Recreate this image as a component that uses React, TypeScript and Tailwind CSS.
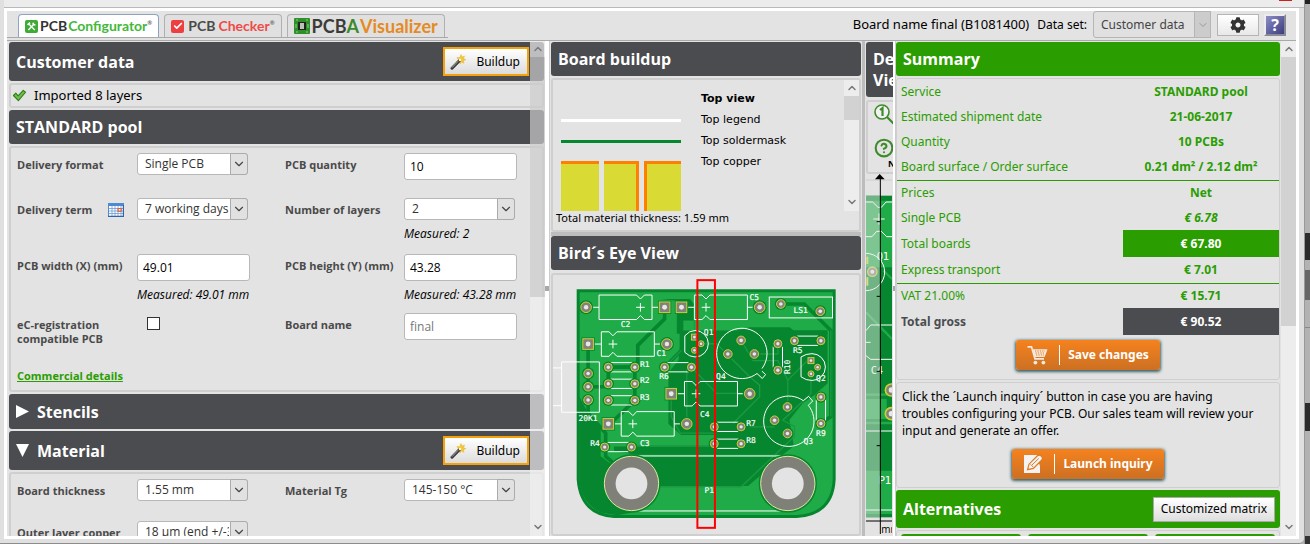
import React from "react";
import { ChevronDown, ChevronUp, Check, HelpCircle } from "lucide-react";
import { FaCog } from "react-icons/fa";
import clsx from "clsx";

/* ---------- small parts ---------- */

function Tab({ active, children }: { active?: boolean; children: React.ReactNode }) {
  return (
    <button
      className={clsx(
        "flex h-[23px] items-center rounded-t-[4px] border border-b-0 px-[6px] font-['Lato',sans-serif] font-bold leading-none",
        active ? "border-[#8fa3c4] bg-white" : "border-[#b0b0b0] bg-[#e0e0e0]",
      )}
    >
      {children}
    </button>
  );
}

function Bar({ children, className, tone = "dark" }: { children: React.ReactNode; className?: string; tone?: "dark" | "green" }) {
  return (
    <div
      className={clsx(
        "flex shrink-0 items-center rounded-[3px] pl-[7px] font-['Open_Sans',sans-serif] text-base font-bold text-white",
        tone === "green" ? "bg-[#2a9d00]" : "bg-[#4b4c50]",
        className,
      )}
    >
      {children}
    </div>
  );
}

function Wand() {
  return (
    <svg viewBox="0 0 16 16" className="size-4" aria-hidden="true">
      <path d="M11 0.5l1 2.5 2.5-1-1 2.5 2.3 1.2-2.5 1 .7 2.6-2.6-1.2-1.4 2-.8-2.6-2.7.2 1.8-2-1.4-2.2 2.7.3z" fill="#f3c838" stroke="#e0a820" strokeWidth=".4" />
      <path d="M2 14.2L9.6 6.5" stroke="#3a3a3a" strokeWidth="3" strokeLinecap="round" />
      <path d="M2.2 13.4L8 7.4" stroke="#b9b9b9" strokeWidth=".9" strokeLinecap="round" />
      <circle cx="10" cy="6" r="1.3" fill="#fff8d0" />
    </svg>
  );
}

function BuildupButton() {
  return (
    <button className="ml-auto mr-[15px] flex h-[29px] w-[86px] items-center justify-between border-2 border-[#f5a20a] bg-linear-to-b from-white to-[#dcdcdc] pl-[5px] pr-[7px] font-['Noto_Sans',sans-serif] text-xs font-normal text-black">
      <Wand />
      Buildup
    </button>
  );
}

function Select({ id, value }: { id: string; value: string }) {
  return (
    <div className="relative h-[22px] w-[111px]">
      <select
        id={id}
        className="block h-full w-full appearance-none overflow-hidden rounded-[3px] border border-[#b8b8b8] bg-white pl-[7px] pr-[18px] font-['Open_Sans',sans-serif] text-xs text-[#333]"
      >
        <option>{value}</option>
      </select>
      <span className="pointer-events-none absolute inset-y-0 right-0 flex w-[18px] items-center justify-center rounded-r-[3px] border border-[#ababab] bg-[#e1e1e1]">
        <ChevronDown className="size-[14px] text-[#444]" strokeWidth={2} />
      </span>
    </div>
  );
}

function Text({ id, value, muted }: { id: string; value: string; muted?: boolean }) {
  return (
    <input
      id={id}
      defaultValue={value}
      className={clsx(
        "block h-[27px] w-[113px] rounded-[3px] border border-[#b8b8b8] bg-white px-[5px] font-['Open_Sans',sans-serif] text-xs",
        muted ? "text-[#777]" : "text-black",
      )}
    />
  );
}

function Label({ htmlFor, children }: { htmlFor: string; children: React.ReactNode }) {
  return (
    <label htmlFor={htmlFor} className="pt-[5px] font-['Open_Sans',sans-serif] text-[11px] font-bold leading-[14px] text-[#4a4a4a]">
      {children}
    </label>
  );
}

function Measured({ children }: { children: React.ReactNode }) {
  return (
    <p className="mt-[5px] whitespace-nowrap font-['Open_Sans',sans-serif] text-xs italic leading-[17px] text-black">{children}</p>
  );
}

function CalendarIcon() {
  return (
    <svg viewBox="0 0 16 14" className="h-[14px] w-4" aria-hidden="true">
      <rect width="16" height="14" fill="#4f8ad0" />
      <rect x="1" y="3" width="14" height="10" fill="#fff" />
      <path d="M1 5.5h14M1 8h14M1 10.5h14M4 3v10M7 3v10M10 3v10M13 3v10" stroke="#6f9cd3" strokeWidth=".8" />
      <path d="M0 13.3h16M15.4 2v12" stroke="#2c64ad" strokeWidth="1.2" />
      <rect x="10" y="5.5" width="3.2" height="2.8" fill="none" stroke="#e8572a" />
    </svg>
  );
}

function OrangeButton({ icon, children }: { icon: React.ReactNode; children: React.ReactNode }) {
  return (
    <button className="mx-auto flex h-[30px] items-center rounded-[3px] bg-linear-to-b from-[#f5821e] to-[#cc7022] px-[11px] text-xs font-bold text-white shadow-[0_1px_3px_1px_#3f6468]">
      {icon}
      <span className="ml-[11px] mr-[8px] h-[20px] w-px bg-white" />
      {children}
    </button>
  );
}

function CartIcon() {
  return (
    <svg viewBox="0 0 21 20" className="h-[20px] w-[21px]" aria-hidden="true">
      <path d="M0.5 1.8H4.5L8 13.8H17" fill="none" stroke="#f3e9df" strokeWidth="1.7" />
      <path d="M5.4 4.2H20.5L17.6 12H7.7Z" fill="#f3e9df" />
      <path d="M8 6h10M8.5 8h9M9 10h8" stroke="#ea7c20" strokeWidth="1" strokeDasharray="1.3 1.1" />
      <circle cx="8.4" cy="17.6" r="1.9" fill="#f3e9df" />
      <circle cx="16.4" cy="17.6" r="1.9" fill="#f3e9df" />
    </svg>
  );
}

function EditIcon() {
  return (
    <svg viewBox="0 0 20 20" className="size-[20px]" aria-hidden="true">
      <path d="M1 1H14V4L17 12V19H1Z" fill="#f3f3f3" />
      <path d="M4.6 15.6L6 10.2L14.4 1.8Q16.4 0.4 18.4 2.2Q20.2 4.2 18.8 6L10.4 14.4Z" fill="#f3f3f3" stroke="#e07a20" strokeWidth="1.2" />
      <path d="M7.6 10.4L10.4 13.2M9 11L15.6 4.6" stroke="#e07a20" strokeWidth="1" />
    </svg>
  );
}

/* ---------- board drawings ---------- */

function RoundPad({ x, y, r = 12 }: { x: number; y: number; r?: number }) {
  return (
    <g>
      <circle cx={x} cy={y} r={r + 5} fill="#05842f" />
      <circle cx={x} cy={y} r={r} fill="#82827a" stroke="#cfcf35" strokeWidth="3" />
      <circle cx={x} cy={y} r={r * 0.42} fill="#e8e8e8" />
    </g>
  );
}

function SquarePad({ x, y, r = 16 }: { x: number; y: number; r?: number }) {
  return (
    <g>
      <rect x={x - r - 4} y={y - r - 4} width={r * 2 + 8} height={r * 2 + 8} fill="#05842f" />
      <rect x={x - r} y={y - r} width={r * 2} height={r * 2} fill="#82827a" stroke="#cfcf35" strokeWidth="3" />
      <circle cx={x} cy={y} r={r * 0.46} fill="#e8e8e8" />
    </g>
  );
}

const CAPS = [
  { x: 145, y: 73, plus: 270, sq: 343, round: 106 },
  { x: 433, y: 73, plus: 468, sq: 394, round: 630 },
  { x: 152, y: 184, plus: 187, sq: 112, round: 350 },
  { x: 403, y: 334, plus: 438, sq: 363, round: 600 },
  { x: 212, y: 425, plus: 247, sq: 173, round: 410 },
];
const H_RES = [
  [173, 253, 291],
  [173, 253, 341],
  [173, 253, 391],
  [343, 424, 291],
  [162, 243, 532],
  [493, 574, 471],
  [493, 574, 522],
  [735, 815, 211],
];
const V_RES = [
  [685, 220, 300],
  [815, 381, 461],
];
const SMALL_PADS = [
  [453, 220],
  [433, 240],
  [805, 291],
  [785, 311],
];
const MID_PADS = [
  [574, 210],
  [534, 251],
  [614, 251],
  [714, 411],
  [675, 451],
  [714, 491],
  [694, 100],
  [813, 122],
  [112, 310],
  [112, 350],
  [112, 390],
];
const NAMES: [string, number, number][] = [
  ["C2", 225, 162],
  ["C5", 614, 80],
  ["C1", 333, 250],
  ["C4", 464, 432],
  ["R1", 283, 281],
  ["R2", 283, 331],
  ["R3", 283, 381],
  ["R4", 133, 521],
  ["C3", 283, 521],
  ["R6", 341, 320],
  ["Q1", 476, 187],
  ["Q4", 513, 318],
  ["20K1", 112, 445],
  ["LS1", 754, 120],
  ["R5", 745, 240],
  ["Q2", 815, 324],
  ["R9", 815, 491],
  ["Q3", 777, 514],
  ["R7", 604, 461],
  ["R8", 604, 511],
  ["P1", 478, 662],
];

function BoardView() {
  return (
    <svg viewBox="6 15 924 768" className="h-[256px] w-full" role="img" aria-label="Board top view">
      <path d="M82 60H855V630Q850 735 742 742H190Q90 735 82 630Z" fill="#1fab48" />
      <path d="M82 60H855V630Q850 735 742 742H190Q90 735 82 630Z" fill="none" stroke="#06852f" strokeWidth="9" />
      <g fill="#06862f">
        <path d="M86 380L112 430L150 480V560L190 590V640H330V655L270 725L200 738L150 730Q90 700 86 630Z" />
        <path d="M360 300L385 270L395 180H560L600 170H720L740 185H835V340L800 370V440L770 500L700 555H260L190 545V530H495V490L390 485L360 450Z" />
        <path d="M243 560H700L595 650H243Z" />
        <path d="M330 85H420L435 105V150H395V190H380V90Z" />
      </g>
      <g fill="#1fab48">
        <path d="M395 490H490V520H395Z" />
        <path d="M760 400L800 372V440L775 500L735 540L720 450Z" />
      </g>
      <g fill="none" stroke="#06862f" strokeWidth="11">
        <path d="M343 110V145L262 225V290L173 291" />
        <path d="M394 110V240L343 291L360 310V460L395 490H493" />
        <path d="M112 220V350H160L173 340V291H253V391L180 461" />
        <path d="M112 390V430L165 490V560L200 590" />
        <path d="M694 100H765L845 180V440L815 461" />
        <path d="M735 205V185H835" />
      </g>
      <g fill="none" stroke="#1c9a44" strokeWidth="4">
        <path d="M433 200V110M343 291L394 240M424 291L500 370H600M453 220H500L600 320L630 345V380L550 460" />
        <path d="M574 210L610 271H685L715 330V411M785 311V370L700 451L735 470V500L574 652H250" />
        <path d="M243 528H493M410 461V291M363 371V440L390 490H493M614 251H685V220M715 330L785 260" />
        <path d="M600 471H675M845 180V440" />
      </g>
      <g fill="none" stroke="#fff" strokeWidth="3">
        {CAPS.map(({ x, y, plus, sq, round }) => (
          <g key={`${x}-${y}`}>
            <path
              d={`M${x} ${y}H${plus - 12}L${plus} ${y + 12}L${plus + 12} ${y}H${x + 160}V${y + 74}H${plus + 12}L${plus} ${y + 62}L${plus - 12} ${y + 74}H${x}Z`}
            />
            <path d={`M${plus - 13} ${y + 37}h26M${plus} ${y + 24}v26`} />
            <path d={sq < x ? `M${sq} ${y + 37}H${x}M${x + 160} ${y + 37}H${round}` : `M${round} ${y + 37}H${x}M${x + 160} ${y + 37}H${sq}`} />
          </g>
        ))}
        {H_RES.map(([a, b, y]) => (
          <path key={`${a}-${y}`} d={`M${a + 8} ${y - 14}H${b - 8}M${a + 8} ${y + 14}H${b - 8}`} />
        ))}
        {V_RES.map(([x, a, b]) => (
          <path key={x} d={`M${x - 14} ${a + 8}V${b - 8}M${x + 14} ${a + 8}V${b - 8}`} />
        ))}
        <path d="M404 196Q418 180 435 180A40 40 0 0 1 435 260Q418 260 404 246Z" />
        <path d="M755 260Q770 250 788 250A40 40 0 0 1 788 331Q770 331 755 320Z" />
        <path d="M637 295A76 76 0 1 0 622 310L638 325L648 313L637 303" />
        <path d="M762 392A76 76 0 1 0 777 406L790 393L778 379L762 392" />
        <rect x="659" y="79" width="191" height="63" />
        <path d="M32 275H146V427H32ZM6 293H32M6 407H32" />
        <path d="M243 559H715M243 725H715" />
      </g>
      {CAPS.map(({ y, sq, round }) => (
        <g key={`${sq}-${y}`}>
          <SquarePad x={sq} y={y + 37} />
          <RoundPad x={round} y={y + 37} r={16} />
        </g>
      ))}
      {H_RES.map(([a, b, y]) => (
        <g key={`${b}-${y}`}>
          <RoundPad x={a} y={y} />
          <RoundPad x={b} y={y} />
        </g>
      ))}
      {V_RES.map(([x, a, b]) => (
        <g key={x}>
          <RoundPad x={x} y={a} />
          <RoundPad x={x} y={b} />
        </g>
      ))}
      {SMALL_PADS.map(([x, y]) => (
        <RoundPad key={`${x}-${y}`} x={x} y={y} r={9} />
      ))}
      {MID_PADS.map(([x, y]) => (
        <RoundPad key={`${x}-${y}`} x={x} y={y} r={13} />
      ))}
      <SquarePad x={433} y={200} r={9} />
      <SquarePad x={785} y={271} r={9} />
      {[243, 715].map((x) => (
        <g key={x}>
          <circle cx={x} cy="642" r="88" fill="#06862f" />
          <circle cx={x} cy="642" r="82" fill="#7f8077" stroke="#e6e9a0" strokeWidth="3" />
          <circle cx={x} cy="642" r="48" fill="#e3e3e3" />
        </g>
      ))}
      <g fill="#fff" stroke="#fff" strokeWidth=".5" fontFamily="DejaVu Sans Mono" fontSize="24" textAnchor="middle">
        {NAMES.map(([t, x, y]) => (
          <text key={t} x={x} y={y + 8}>
            {t}
          </text>
        ))}
        <text transform="translate(723 290) rotate(-90)">R10</text>
      </g>
      <rect x="442" y="28" width="53" height="748" fill="none" stroke="#f00" strokeWidth="6" />
    </svg>
  );
}

function DetailView() {
  return (
    <svg viewBox="48 250 78 1083" className="h-[361px] w-[26px] shrink-0" role="img" aria-label="Zoomed board">
      <path d="M48 268H126" stroke="#ccc" strokeWidth="3" />
      <rect x="48" y="315" width="78" height="965" fill="#06862f" />
      <path d="M48 330H126V530H48ZM48 925H110V985H48ZM48 1140H126V1270H48Z" fill="#1fab48" />
      <path d="M48 665L126 745M48 912H126M48 997H126M100 540L126 565" stroke="#1fab48" strokeWidth="7" fill="none" />
      <g fill="none" stroke="#fff" strokeWidth="3">
        <path d="M48 334H68L84 350H94L108 334H126M48 438H66L80 422H94L110 438H126M70 385H104M87 368V402" />
        <path d="M48 488A56 56 0 0 1 48 600M126 703H62L48 720M48 795L62 806H126M48 755H62M48 1021H126M48 1258H126" />
      </g>
      <path d="M52 498V520M52 560V585" stroke="#cfcf35" strokeWidth="6" />
      <circle cx="67" cy="543" r="14" fill="#82827a" stroke="#cfcf35" strokeWidth="4" />
      <circle cx="67" cy="543" r="6" fill="#e8e8e8" />
      {[898, 969].map((y) => (
        <g key={y}>
          <circle cx="124" cy={y} r="18" fill="#82827a" stroke="#cfcf35" strokeWidth="5" />
          <circle cx="124" cy={y} r="8" fill="#e8e8e8" />
        </g>
      ))}
      <g fill="#fff" fontFamily="DejaVu Sans Mono" fontSize="31">
        <text x="80" y="507">Q1</text>
        <text x="62" y="851">C4</text>
        <text x="86" y="1180">P1</text>
      </g>
      <rect x="48" y="315" width="42" height="965" fill="#e3e3e3" opacity=".48" />
      <path d="M75 266H104L89 250Z" />
      <path d="M91 262V1330M80 393H91M80 617H91M80 842H91M80 1065H91M48 1291H126" stroke="#000" strokeWidth="3" />
      <text x="94" y="1326" fontFamily="Open Sans" fontSize="30">mm</text>
    </svg>
  );
}

function Scroll({ thumb, overlay }: { thumb: string; overlay?: boolean }) {
  const track = overlay ? "bg-[#f0f0f0]/70" : "bg-[#ededed]";
  return (
    <div className="flex h-full w-[15px] shrink-0 flex-col text-[#7a7a7a]">
      <div className={clsx("flex h-[16px] shrink-0 items-center justify-center", track)}>
        <ChevronUp className="size-3" strokeWidth={3} />
      </div>
      <div className={clsx("shrink-0", thumb, overlay ? "bg-[#ccc]/70" : "bg-[#d2d2d2]")} />
      <div className={clsx("flex flex-1 items-end justify-center pb-[3px]", track)}>
        <ChevronDown className="size-3" strokeWidth={3} />
      </div>
    </div>
  );
}

function Divider({ className }: { className: string }) {
  return (
    <div className={clsx("flex shrink-0 items-center bg-white", className)}>
      <span className="h-[5px] w-full bg-[#a8a8a8]" />
    </div>
  );
}

const panel = "rounded-[3px] border-2 border-[#cfcfcf] bg-[#e3e3e3]";

/* ---------- columns ---------- */

function LeftColumn() {
  return (
    <section className="relative h-full w-[538px] shrink-0 overflow-hidden pt-px">
      <div className="flex flex-col gap-[2px] pl-[2px] pr-px">
        <Bar className="h-[39px]">
          <h2>Customer data</h2>
          <BuildupButton />
        </Bar>
        <div className={clsx(panel, "flex h-[25px] items-center gap-[7px] pl-px text-[13px] text-black")}>
          <svg viewBox="0 0 16 14" className="h-[13px] w-[15px]" aria-hidden="true">
            <path d="M1.5 7L4 4.5L6.5 7.5L12 1.5L14.5 3.5L6.8 12.5Z" fill="#6cc04a" stroke="#2f7d1b" strokeWidth="1.2" strokeLinejoin="round" />
          </svg>
          Imported 8 layers
        </div>
        <Bar className="h-[34px]">
          <h2>STANDARD pool</h2>
        </Bar>
        <div className={clsx(panel, "h-[246px] pl-[6px] pt-[5px]")}>
          <div className="grid grid-cols-[120px_148px_119px_113px] grid-rows-[45px_56px_59px_53px]">
            <Label htmlFor="format">Delivery format</Label>
            <Select id="format" value="Single PCB" />
            <Label htmlFor="qty">PCB quantity</Label>
            <Text id="qty" value="10" />

            <div className="flex items-start justify-between pr-[13px]">
              <Label htmlFor="term">Delivery term</Label>
              <span className="pt-[5px]">
                <CalendarIcon />
              </span>
            </div>
            <Select id="term" value="7 working days" />
            <Label htmlFor="layers">Number of layers</Label>
            <div>
              <Select id="layers" value="2" />
              <Measured>Measured: 2</Measured>
            </div>

            <Label htmlFor="w">PCB width (X) (mm)</Label>
            <div>
              <Text id="w" value="49.01" />
              <Measured>Measured: 49.01 mm</Measured>
            </div>
            <Label htmlFor="h">PCB height (Y) (mm)</Label>
            <div>
              <Text id="h" value="43.28" />
              <Measured>Measured: 43.28 mm</Measured>
            </div>

            <Label htmlFor="ec">
              eC-registration
              <br />
              compatible PCB
            </Label>
            <div className="pl-[10px] pt-[4px]">
              <input id="ec" type="checkbox" className="block size-[13px] appearance-none border border-[#333] bg-white" />
            </div>
            <Label htmlFor="bname">Board name</Label>
            <Text id="bname" value="final" muted />
          </div>
          <a href="#commercial" className="block w-fit font-['Open_Sans',sans-serif] text-[11px] font-bold leading-[20px] text-[#2a9d00] underline">
            Commercial details
          </a>
        </div>
        <Bar className="h-[35px] gap-[8px]">
          <svg viewBox="0 0 12 12" className="size-[13px]" aria-hidden="true">
            <path d="M0 0L12 6L0 12Z" fill="#fff" />
          </svg>
          <h2>Stencils</h2>
        </Bar>
        <Bar className="h-[39px] gap-[8px]">
          <svg viewBox="0 0 12 12" className="size-[13px]" aria-hidden="true">
            <path d="M0 0H12L6 12Z" fill="#fff" />
          </svg>
          <h2>Material</h2>
          <BuildupButton />
        </Bar>
        <div className={clsx(panel, "h-[246px] pl-[6px] pt-[5px]")}>
          <div className="grid grid-cols-[120px_148px_119px_113px] grid-rows-[42px_45px]">
            <Label htmlFor="thick">Board thickness</Label>
            <Select id="thick" value="1.55 mm" />
            <Label htmlFor="tg">Material Tg</Label>
            <Select id="tg" value="145-150 °C" />
            <Label htmlFor="outer">Outer layer copper</Label>
            <Select id="outer" value="18 µm (end +/-35 µm)" />
          </div>
        </div>
      </div>
      <div className="absolute inset-y-0 right-0">
        <Scroll overlay thumb="h-[240px]" />
      </div>
    </section>
  );
}

const BUILDUP = ["Top legend", "Top soldermask", "Top copper"];

function MiddleColumn() {
  return (
    <section className="flex h-full min-w-0 flex-1 flex-col border-l border-[#ccc] pl-px pr-px pt-px">
      <Bar className="h-[34px]">
        <h2>Board buildup</h2>
      </Bar>
      <div className={clsx(panel, "mt-[2px] h-[154px] shrink-0")}>
        <div className="flex h-[131px]">
          <svg viewBox="0 0 140 131" className="h-[131px] w-[140px]" aria-hidden="true">
            <rect x="8" y="39" width="120" height="3" fill="#fff" />
            <rect x="8" y="60" width="120" height="3" fill="#06862f" />
            <rect x="8" y="81" width="120" height="51" fill="#ff8000" />
            <path d="M8 84h38v48H8zM51 84h32v48H51zM94 84h34v48H94z" fill="#d9da33" />
            <path d="M46 81h5v51h-5zM86 81h5v51h-5z" fill="#e3e3e3" />
          </svg>
          <ul className="flex-1 pl-[8px] pt-[8px] font-['DejaVu_Sans'] text-[11px] leading-[21px] text-black">
            <li className="font-bold">Top view</li>
            {BUILDUP.map((t) => (
              <li key={t}>{t}</li>
            ))}
          </ul>
          <Scroll thumb="h-[24px]" />
        </div>
        <p className="pl-[3px] text-[11px] leading-[14px] text-black">Total material thickness: 1.59 mm</p>
      </div>
      <div className="h-[4px] shrink-0 bg-[#bdbdbd]" />
      <Bar className="h-[34px]">
        <h2>Bird´s Eye View</h2>
      </Bar>
      <div className={clsx(panel, "mt-[3px] min-h-0 flex-1 overflow-hidden")}>
        <BoardView />
      </div>
    </section>
  );
}

function DetailColumn() {
  return (
    <section className="flex h-full w-[31px] shrink-0 flex-col overflow-hidden border-l-[3px] border-[#bdbdbd] pl-px pt-px">
      <div className="h-[55px] w-[100px] shrink-0 rounded-[3px] bg-[#4b4c50] pl-[7px] pt-[7px] font-['Open_Sans',sans-serif] text-base font-bold leading-[21px] text-white">
        <h2>
          Detailed
          <br />
          View
        </h2>
      </div>
      <div className={clsx(panel, "mt-[3px] h-[74px] w-[100px] shrink-0 pl-[6px] pt-[2px]")}>
        <svg viewBox="0 0 22 22" className="size-[22px]" aria-hidden="true">
          <circle cx="8" cy="8" r="7" fill="#f2f2f2" stroke="#3f8a2c" strokeWidth="1.6" />
          <path d="M6 6L8.5 4V12M13 13L20 20" stroke="#3f8a2c" strokeWidth="2.2" fill="none" />
        </svg>
        <HelpCircle className="mt-[12px] size-[20px] text-[#3f8a2c]" strokeWidth={2.5} />
        <p className="pl-[14px] text-[9px] font-bold leading-[12px] text-black">No</p>
      </div>
      <DetailView />
    </section>
  );
}

type Row = { name: string; value: string; mode?: "line" | "green" | "dark" | "italic" };
const ROWS: Row[] = [
  { name: "Service", value: "STANDARD pool" },
  { name: "Estimated shipment date", value: "21-06-2017" },
  { name: "Quantity", value: "10 PCBs" },
  { name: "Board surface / Order surface", value: "0.21 dm² / 2.12 dm²", mode: "line" },
  { name: "Prices", value: "Net" },
  { name: "Single PCB", value: "€ 6.78", mode: "italic" },
  { name: "Total boards", value: "€ 67.80", mode: "green" },
  { name: "Express transport", value: "€ 7.01", mode: "line" },
  { name: "VAT 21.00%", value: "€ 15.71" },
  { name: "Total gross", value: "€ 90.52", mode: "dark" },
];

function SummaryColumn() {
  return (
    <aside className="flex h-full w-[401px] shrink-0 overflow-hidden">
      <div className="flex min-w-0 flex-1 flex-col gap-[2px] border-l border-[#ccc] pr-px pt-px">
        <Bar tone="green" className="h-[34px]">
          <h2>Summary</h2>
        </Bar>
        <div className="rounded-[3px] border border-[#cfcfcf] pb-[9px]">
          <table className="w-full border-collapse text-xs text-[#2a9d00]">
            <tbody>
              {ROWS.map(({ name, value, mode }) => (
                <tr
                  key={name}
                  className={clsx(
                    mode === "line" && "h-[26px] border-b border-[#2a9d00]",
                    (mode === "green" || mode === "dark") && "h-[27px]",
                    (!mode || mode === "italic") && "h-[25px]",
                  )}
                >
                  <th scope="row" className={clsx("p-0 pl-[4px] text-left", mode === "dark" ? "font-bold text-[#4b4c50]" : "font-normal")}>
                    {name}
                  </th>
                  <td
                    className={clsx(
                      "w-[156px] p-0 text-center font-bold",
                      mode === "green" && "bg-[#2a9d00] text-white",
                      mode === "dark" && "bg-[#4b4c50] text-white",
                      mode === "italic" && "italic",
                    )}
                  >
                    {value}
                  </td>
                </tr>
              ))}
            </tbody>
          </table>
          <div className="mt-[5px] flex">
            <OrangeButton icon={<CartIcon />}>Save changes</OrangeButton>
          </div>
        </div>
        <div className="rounded-[3px] border border-[#cfcfcf] px-[5px] pb-[8px] pt-[5px] text-xs leading-[17px] text-black">
          <p>
            Click the ´Launch inquiry´ button in case you are having
            <br />
            troubles configuring your PCB. Our sales team will review your
            <br />
            input and generate an offer.
          </p>
          <div className="mt-[10px] flex">
            <OrangeButton icon={<EditIcon />}>Launch inquiry</OrangeButton>
          </div>
        </div>
        <Bar tone="green" className="h-[38px]">
          <h2>Alternatives</h2>
          <button className="ml-auto mr-[5px] h-[25px] border border-[#aaa] bg-linear-to-b from-white to-[#dedede] px-[7px] font-['Noto_Sans',sans-serif] text-xs font-normal text-black">
            Customized matrix
          </button>
        </Bar>
        <div className="grid grid-cols-3 gap-[7px] rounded-t-[3px] border border-[#cfcfcf] px-[4px] pt-[3px]">
          {[0, 1, 2].map((n) => (
            <div key={n} className="h-[20px] rounded-[3px] bg-[#2a9d00]" />
          ))}
        </div>
      </div>
      <Scroll thumb="h-[269px]" />
    </aside>
  );
}

function Header() {
  return (
    <header className="flex h-[30px] shrink-0 items-end border-b border-[#a9a9a9] pb-[2px]">
      <nav className="flex h-full items-end gap-[5px] border-b border-[#a9a9a9] pl-[11px] pr-[3px]">
        <Tab active>
          <svg viewBox="0 0 13 13" className="size-[13px]" aria-hidden="true">
            <rect width="13" height="13" rx="2" fill="#3dab35" />
            <path d="M4 4.2L9.8 10M9 4L3.4 10" stroke="#fff" strokeWidth="1.3" />
            <path d="M2.6 4.8L5 2.6M8 2.8L8.6 4.6L10.4 5" stroke="#fff" strokeWidth="1.7" fill="none" />
          </svg>
          <span className="ml-[2px] text-[14px] text-[#333]">PCB</span>
          <span className="ml-px text-[14px] text-[#43b83a]">Configurator</span>
          <sup className="text-[6px] text-[#666]">®</sup>
        </Tab>
        <Tab>
          <span className="flex size-[13px] items-center justify-center rounded-[2px] bg-[#ee3f40] text-white">
            <Check className="size-[10px]" strokeWidth={4} />
          </span>
          <span className="ml-[4px] text-[14px] text-[#4a4a4a]">PCB</span>
          <span className="ml-[3px] text-[14px] text-[#f04a48]">Checker</span>
          <sup className="text-[6px] text-[#666]">®</sup>
        </Tab>
        <Tab>
          <svg viewBox="0 0 16 16" className="size-[16px]" aria-hidden="true">
            <rect width="16" height="16" rx="1" fill="#2f8f2b" />
            <rect x="4" y="4" width="8" height="8" fill="#222" />
            <rect x="6" y="5" width="4" height="6" fill="#b9c4b4" />
            <path d="M2 2h2M12 2h2M2 14h2M12 14h2M2 6v4M14 6v4" stroke="#8fd080" />
          </svg>
          <span className="ml-[2px] text-[18px] text-[#3c3c3a]">PCB</span>
          <span className="text-[18px] text-[#3a8a2c]">A</span>
          <span className="ml-px text-[18px] text-[#e58a24]">Visualizer</span>
        </Tab>
      </nav>
      <div className="ml-auto flex h-[27px] items-center pr-[10px] text-xs text-black">
        <span className="text-[13px]">Board name final (B1081400)</span>
        <label htmlFor="dataset" className="ml-[8px]">
          Data set:
        </label>
        <div className="relative ml-[6px] h-[27px] w-[118px]">
          <select id="dataset" disabled className="block h-full w-full appearance-none rounded-[3px] border border-[#b5b5b5] bg-[#e0e0e0] pl-[7px] text-xs text-[#444] opacity-100">
            <option>Customer data</option>
          </select>
          <span className="pointer-events-none absolute inset-y-0 right-0 flex w-[17px] items-center justify-center border border-[#b5b5b5] bg-[#ccc]">
            <ChevronDown className="size-3 text-[#999]" />
          </span>
        </div>
        <button aria-label="Settings" className="ml-[6px] flex h-[22px] w-[42px] items-center justify-center border border-[#b5b5b5] bg-linear-to-b from-white to-[#e8e8e8]">
          <FaCog className="size-[16px] text-[#333]" />
        </button>
        <button
          aria-label="Help"
          className="ml-[5px] flex h-[22px] w-[22px] items-center justify-center border-2 border-[#ececec] border-b-[#8a8a96] border-r-[#8a8a96] bg-linear-to-br from-[#8e8ec6] to-[#3d3d80] text-[16px] font-bold leading-none text-white"
        >
          ?
        </button>
      </div>
    </header>
  );
}

export default function App() {
  return (
    <div className="flex h-screen w-full overflow-hidden bg-[#b3b3b3] font-['Noto_Sans',sans-serif]">
      <div className="flex min-w-0 flex-1 flex-col rounded-br-[5px] border-b border-[#8d8d8d] bg-[#e0e0e0]">
        <div className="ml-[4px] flex h-[8px] shrink-0 justify-end border-b border-[#b9b9b9] bg-[#ececec] pr-[12px]">
          <span className="h-px w-[13px] bg-[#c8201c]" />
        </div>
        <div className="mb-[4px] ml-[4px] mr-[5px] flex min-h-0 flex-1 flex-col border-[3px] border-white bg-[#e3e3e3]">
          <Header />
          <main className="flex min-h-0 flex-1">
            <LeftColumn />
            <Divider className="w-[4px]" />
            <MiddleColumn />
            <DetailColumn />
            <Divider className="w-[2px]" />
            <SummaryColumn />
          </main>
        </div>
      </div>
      <div className="flex w-[6px] shrink-0 flex-col border-l border-[#999]" aria-hidden="true">
        <div className="h-[4px] bg-[#222]" />
        <div className="mt-[229px] h-[27px] bg-[#2c2c2c]" />
        <div className="mt-[10px] h-[30px] bg-[#666]" />
        <div className="mt-[27px] h-px bg-[#888]" />
        <div className="mt-[75px] h-[28px] bg-[#2c2c2c]" />
        <div className="mt-auto h-[8px] bg-[#333]" />
      </div>
    </div>
  );
}
